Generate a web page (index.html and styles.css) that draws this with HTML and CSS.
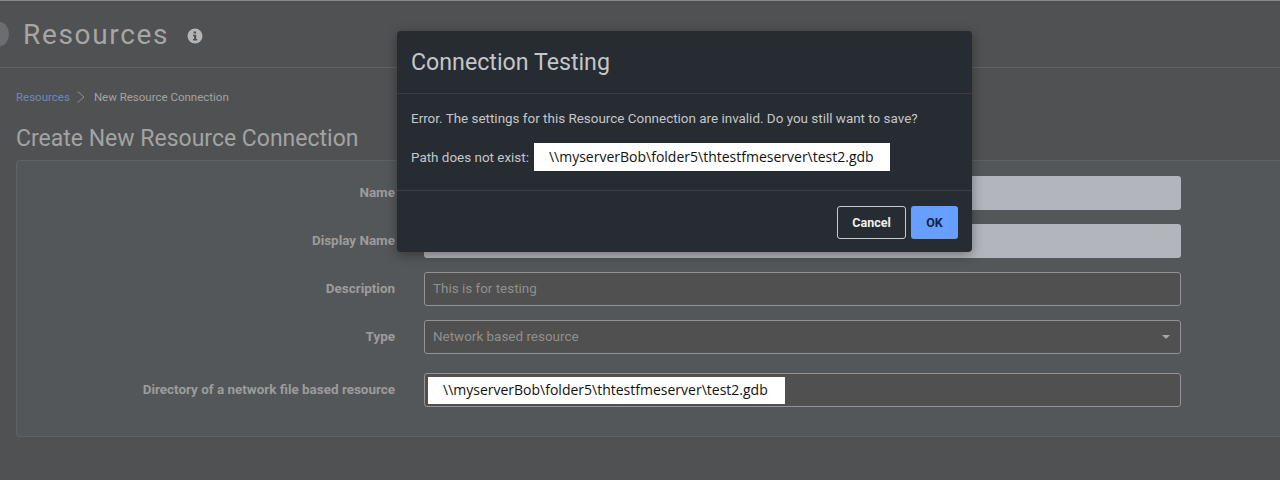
FILE: index.html
```html
<!DOCTYPE html>
<html lang="en">
<head>
    <meta charset="UTF-8">
    <title>Resources</title>
    <link rel="stylesheet" href="styles.css">
</head>
<body>
    <div class="page_head">
        <span class="nav_dot"></span>
        <h1>Resources</h1>
        <svg class="info_icon" width="16" height="16" viewBox="0 0 16 16">
            <circle cx="8" cy="8" r="7.5" fill="#b5b5b5"/>
            <path d="M6.6 3.4h2.5v2.2H6.6zM6 6.8h3.2v4.3h1v1.4H6v-1.4h1V8.2H6z" fill="#505152"/>
        </svg>
    </div>

    <div class="crumbs">
        <a>Resources</a>
        <svg width="10" height="14" viewBox="0 0 10 14"><path d="M1.500 1.500L8 7l-6.500 5.500" fill="none" stroke="#8f8f8f"/></svg>
        <span>New Resource Connection</span>
    </div>

    <h2>Create New Resource Connection</h2>

    <div class="panel">
        <div class="row">
            <label>Name</label>
            <div class="field filled"></div>
        </div>
        <div class="row">
            <label>Display Name</label>
            <div class="field filled"></div>
        </div>
        <div class="row">
            <label>Description</label>
            <div class="field">This is for testing</div>
        </div>
        <div class="row">
            <label>Type</label>
            <div class="field select">Network based resource<span class="caret"></span></div>
        </div>
        <div class="row row_last">
            <label>Directory of a network file based resource</label>
            <div class="field field_path"><span class="path path_field">\\myserverBob\folder5\thtestfmeserver\test2.gdb</span></div>
        </div>
    </div>

    <div class="modal">
        <div class="modal_head">Connection Testing</div>
        <div class="modal_body">
            <p>Error. The settings for this Resource Connection are invalid. Do you still want to save?</p>
            <div class="path_line">Path does not exist:<span class="path path_modal">\\myserverBob\folder5\thtestfmeserver\test2.gdb</span></div>
        </div>
        <div class="modal_foot">
            <div class="btn btn_cancel">Cancel</div>
            <div class="btn btn_ok">OK</div>
        </div>
    </div>
</body>
</html>
```

FILE: styles.css
```css
*{margin: 0;padding: 0;box-sizing: border-box;}
html,body{height: 480px;overflow: hidden;}
body{position: relative;background: #505152;border-top: 1px solid #8a8a8a;font-family: Roboto, "Liberation Sans", sans-serif;color: #a3a3a3;}

.page_head{display: flex;align-items: center;height: 67px;border-bottom: 1px solid #606264;}
.nav_dot{width: 9px;height: 24px;margin-right: 14px;border-radius: 0 9px 9px 0 / 0 12px 12px 0;background: #6a6e71;}
.page_head h1{font-size: 28px;font-weight: 400;letter-spacing: 1.67px;color: #a6a6a6;}
.info_icon{margin-left: 18px;margin-top: 3px;}

.crumbs{display: flex;align-items: center;height: 16px;margin: 21px 0 0 16px;font-size: 11.500px;color: #a3a3a3;}
.crumbs a{color: #6c8ab8;}
.crumbs svg{margin: 0 8px 0 6px;}

h2{margin: 19px 0 0 16px;font-size: 23px;line-height: 30px;font-weight: 400;color: #a3a3a3;}

.panel{margin: 6px 0 0 16px;height: 277px;padding-top: 15px;background: #54575a;border: 1px solid #5f6265;border-right: 0;border-radius: 4px 0 0 4px;}
.row{display: flex;align-items: center;height: 34px;margin-bottom: 14px;}
.row_last{margin-top: 19px;margin-bottom: 0;}
.row label{width: 378px;padding-bottom: 2px;text-align: right;font-size: 13.440px;font-weight: 700;color: #9c9c9c;}

.field{position: relative;display: flex;align-items: center;width: 757px;height: 34px;margin-left: 29px;padding: 0 8px 1px;border: 1px solid #919396;border-radius: 3px;background: #505050;font-size: 13.440px;color: #8f8f8f;}
.filled{border: 0;background: #b2b5bb;}
.caret{position: absolute;right: 10px;top: 14px;border: 4px solid transparent;border-top-color: #a5a5a5;border-bottom: 0;}
.field_path{padding: 0 3px;}

.path{display: block;background: #fff;color: #111;font-family: "Open Sans", sans-serif;font-size: 14px;}
.path_field{width: 357px;height: 27px;line-height: 26px;padding-left: 15px;}
.path_modal{width: 356px;height: 28px;line-height: 28px;margin-left: 5px;padding-left: 15px;}

.modal{position: absolute;left: 397px;top: 30px;width: 575px;height: 221px;background: #272b32;border-radius: 4px;box-shadow: 0 3px 12px rgba(0,0,0,.35);color: #c4c6c9;}
.modal_head{height: 63px;padding: 16px 14px 0;border-bottom: 1px solid #3a3e44;font-size: 23.200px;line-height: 30px;}
.modal_body{height: 97px;padding: 16px 14px 0;border-bottom: 1px solid #3a3e44;font-size: 13.440px;}
.modal_body p{line-height: 17px;}
.path_line{display: flex;align-items: center;margin-top: 16px;}
.modal_foot{display: flex;justify-content: flex-end;gap: 5px;padding: 15px 14px 0;}
.btn{display: flex;align-items: center;justify-content: center;height: 33px;border-radius: 3px;font-size: 12.500px;font-weight: 700;}
.btn_cancel{width: 69px;border: 1px solid #c9cbce;color: #f0f0f0;}
.btn_ok{width: 47px;background: #669fff;color: #14233f;}
```
